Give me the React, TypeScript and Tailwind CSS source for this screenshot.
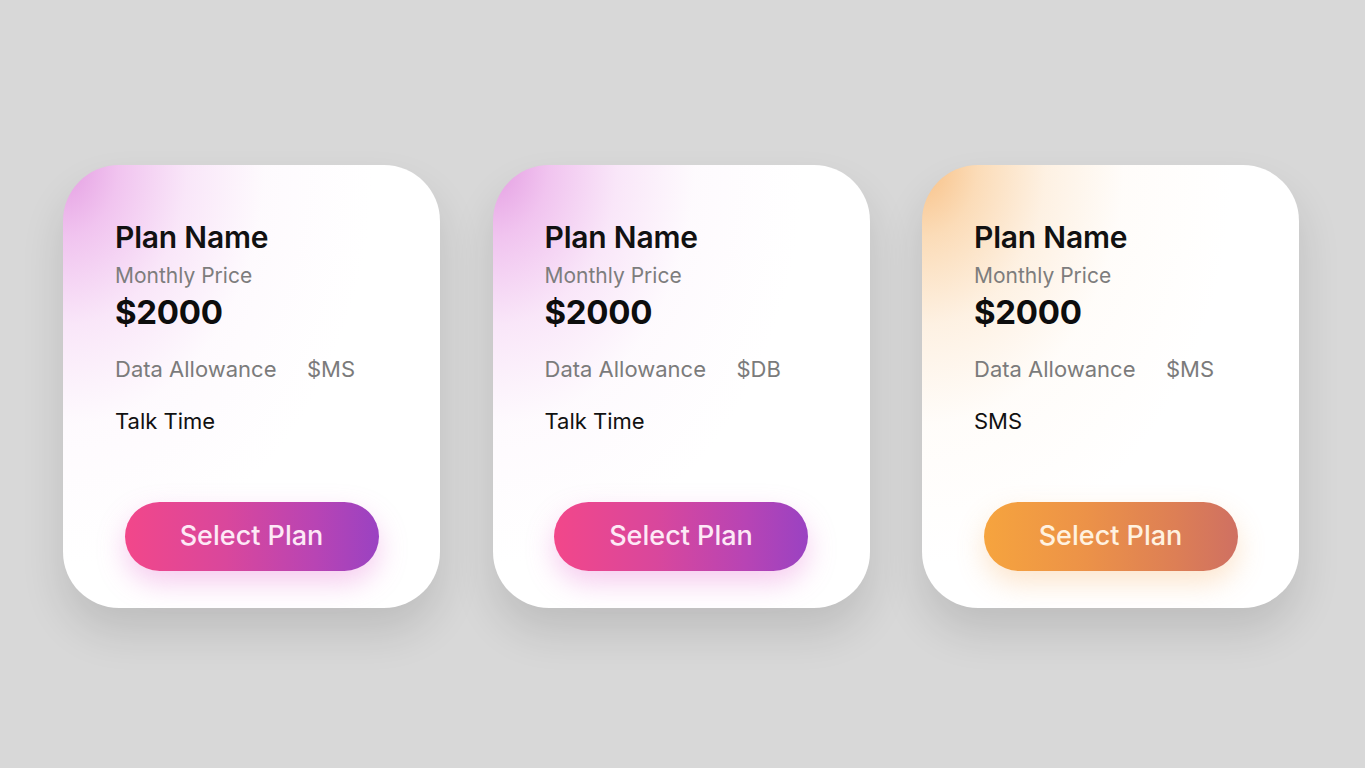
const plans = [
  {
    extra: "$MS",
    line: "Talk Time",
    glow: "bg-[radial-gradient(ellipse_310px_400px_at_0%_0%,#e49de2_0%,rgba(236,176,234,0.75)_18%,rgba(242,200,241,0.45)_40%,rgba(248,228,247,0.18)_65%,rgba(255,255,255,0)_100%)]",
    button:
      "bg-[linear-gradient(90deg,#f2478a_0%,#d9479c_40%,#b844b4_75%,#9a42c2_100%)] shadow-[0_12px_28px_rgba(230,110,210,0.35)] text-[#fde9f6]",
  },
  {
    extra: "$DB",
    line: "Talk Time",
    glow: "bg-[radial-gradient(ellipse_310px_400px_at_0%_0%,#e49de2_0%,rgba(236,176,234,0.75)_18%,rgba(242,200,241,0.45)_40%,rgba(248,228,247,0.18)_65%,rgba(255,255,255,0)_100%)]",
    button:
      "bg-[linear-gradient(90deg,#f2478a_0%,#d9479c_40%,#b844b4_75%,#9a42c2_100%)] shadow-[0_12px_28px_rgba(230,110,210,0.35)] text-[#fde9f6]",
  },
  {
    extra: "$MS",
    line: "SMS",
    glow: "bg-[radial-gradient(ellipse_310px_400px_at_0%_0%,#f8c085_0%,rgba(250,208,160,0.75)_18%,rgba(252,224,192,0.45)_40%,rgba(254,240,225,0.18)_65%,rgba(255,255,255,0)_100%)]",
    button:
      "bg-[linear-gradient(90deg,#f6a43e_0%,#ec9248_40%,#dd7f55_75%,#cf7062_100%)] shadow-[0_12px_28px_rgba(245,170,90,0.3)] text-[#fff2e0]",
  },
];

function PlanCard({ extra, line, glow, button }: (typeof plans)[number]) {
  return (
    <div
      className={`w-[377px] h-[443px] rounded-[56px] bg-white ${glow} shadow-[0_24px_44px_rgba(0,0,0,0.12)] flex flex-col pt-[54px] pb-[37px] px-[52px]`}
    >
      <h2 className="text-[30px] leading-[36px] font-semibold text-[#111] tracking-[-0.2px]">Plan Name</h2>
      <p className="mt-[8px] text-[21px] leading-[26px] text-[#7d7d7d]">Monthly Price</p>
      <p className="mt-[3px] text-[33px] leading-[40px] font-bold text-[#0d0d0d] tracking-[-0.3px]">$2000</p>
      <div className="mt-[24px] flex text-[22px] leading-[26px] text-[#7b7b7b]">
        <span className="w-[192px]">Data Allowance</span>
        <span>{extra}</span>
      </div>
      <p className="mt-[26px] text-[22px] leading-[26px] text-[#111]">{line}</p>
      <button
        className={`mt-auto mx-auto w-[254px] h-[69px] rounded-full ${button} text-[27px] font-medium`}
      >
        Select Plan
      </button>
    </div>
  );
}

export default function App() {
  return (
    <div className="min-h-screen bg-[#d8d8d8] flex items-start pt-[165px] pl-[63px] gap-[52.5px] font-['Inter',sans-serif]">
      {plans.map((p, i) => (
        <PlanCard key={i} {...p} />
      ))}
    </div>
  );
}
